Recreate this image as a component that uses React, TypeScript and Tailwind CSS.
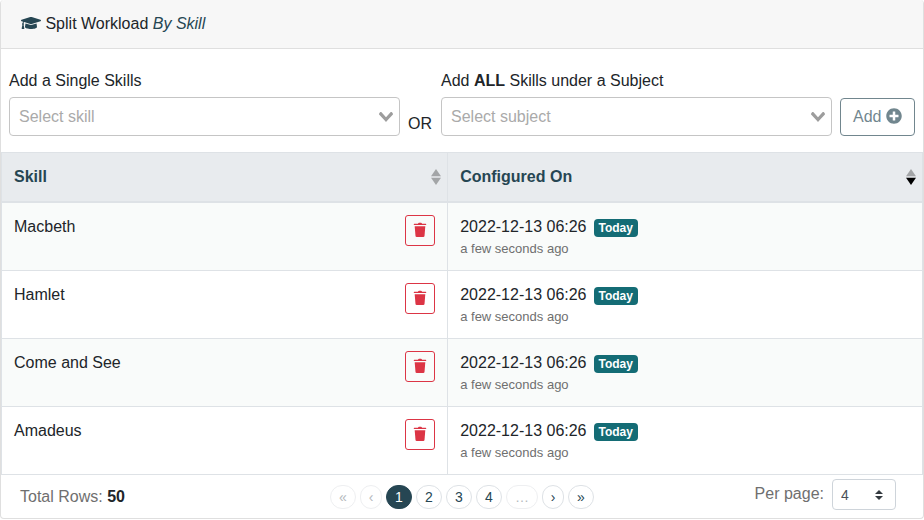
import React from "react";
import { FaGraduationCap, FaPlusCircle } from "react-icons/fa";

const rows = ["Macbeth", "Hamlet", "Come and See", "Amadeus"];

function SearchSelect({ id, label, placeholder }: { id: string; label: React.ReactNode; placeholder: string }) {
  return (
    <div className="min-w-0 flex-1">
      <label htmlFor={id} className="mb-1 block">
        {label}
      </label>
      <div className="flex h-[39px] items-center rounded border border-[#c5c5c5] bg-white pr-1.5 pl-[9px]">
        <input
          id={id}
          type="text"
          role="combobox"
          aria-expanded="false"
          placeholder={placeholder}
          className="min-w-0 flex-1 bg-transparent outline-none placeholder:text-[#aaaaaa]"
        />
        <svg width="14" height="10" viewBox="0 0 14 10" className="shrink-0 fill-[#9d9d9d]" aria-hidden="true">
          <path d="M9.211364 7.59931l4.48338-4.867229c.407008-.441854.407008-1.158247 0-1.60046l-.73712-.80023c-.407008-.441854-1.066904-.441854-1.474243 0L7 5.198617 2.51662.33139c-.407008-.441853-1.066904-.441853-1.474243 0l-.737121.80023c-.407008.441854-.407008 1.158248 0 1.600461l4.48338 4.867228L7 10l2.211364-2.40069z" />
        </svg>
      </div>
    </div>
  );
}

function SortHeader({ title, descending = false }: { title: string; descending?: boolean }) {
  return (
    <button type="button" className="flex w-full items-center justify-between font-bold">
      {title}
      <svg width="10" height="16" viewBox="0 0 10 16" aria-hidden="true">
        <path d="M5 0L10 7.3H0z" fill="#a3a5a7" />
        <path d="M5 16L10 8.7H0z" fill={descending ? "#000000" : "#a3a5a7"} />
      </svg>
    </button>
  );
}

function TrashIcon() {
  return (
    <svg width="14" height="16" viewBox="0 0 14 16" fill="currentColor" aria-hidden="true">
      <path d="M5.2 1.2Q5.4.7 6 .7h2q.6 0 .8.5l.2.5h3.700q.5 0 .5.5v.5q0 .4-.5.4H1.300q-.5 0-.5-.4v-.5q0-.5.5-.5H5z" />
      <path d="M1.700 4.200h10.600l-.8 9.700q-.1 1.100-1.200 1.100H3.700q-1.100 0-1.200-1.100z" />
    </svg>
  );
}

function PageButton({
  children,
  width = "w-[26px]",
  current = false,
  disabled = false,
  label,
}: {
  children: React.ReactNode;
  width?: string;
  current?: boolean;
  disabled?: boolean;
  label?: string;
}) {
  const tone = current
    ? "border-[#264653] bg-[#264653] text-white"
    : disabled
      ? "border-[#eeeff1] text-[#b4b9bd]"
      : "border-[#dee2e6] text-[#264653]";
  return (
    <li>
      <button
        type="button"
        disabled={disabled}
        aria-label={label}
        aria-current={current ? "page" : undefined}
        className={`flex h-6 items-center justify-center rounded-full border text-sm ${width} ${tone}`}
      >
        {children}
      </button>
    </li>
  );
}

export default function App() {
  return (
    <div className="rounded border border-t-0 border-[#dfdfdf] bg-white font-['Liberation_Sans',Arial,sans-serif] text-base text-[#212529]">
      <header className="rounded-t border-b border-[#dfdfdf] bg-[#f7f7f7] px-5 py-3">
        <h1>
          <FaGraduationCap className="inline w-5 align-[-2px] text-[#264653]" aria-hidden="true" /> Split Workload{" "}
          <span className="text-[#264653] italic">By Skill</span>
        </h1>
      </header>

      <form className="flex items-end gap-2 px-2 pt-5 pb-4">
        <SearchSelect id="skill" label="Add a Single Skills" placeholder="Select skill" />
        <span className="w-[25px]">OR</span>
        <SearchSelect
          id="subject"
          label={
            <>
              Add <strong>ALL</strong> Skills under a Subject
            </>
          }
          placeholder="Select subject"
        />
        <button
          type="button"
          disabled
          className="h-[38px] w-[75px] rounded border border-[#264653] text-[#264653] opacity-65"
        >
          Add <FaPlusCircle className="inline align-[-2px]" aria-hidden="true" />
        </button>
      </form>

      <table className="w-full table-fixed border-separate border-spacing-0 border-x border-[#dee2e6]">
        <colgroup>
          <col className="w-[48.5%]" />
          <col />
        </colgroup>
        <thead className="bg-[#e8ebee] text-left text-[#264653]">
          <tr>
            <th className="border-t border-r border-b-2 border-[#dee2e6] py-3 pr-1.5 pl-3" aria-sort="none">
              <SortHeader title="Skill" />
            </th>
            <th className="border-t border-b-2 border-[#dee2e6] py-3 pr-1.5 pl-3" aria-sort="descending">
              <SortHeader title="Configured On" descending />
            </th>
          </tr>
        </thead>
        <tbody>
          {rows.map((name) => (
            <tr key={name} className="h-[68px] align-top odd:bg-[#f9fbfa]">
              <td className="border-r border-b border-[#dee2e6] p-3">
                <div className="flex items-start justify-between">
                  {name}
                  <button
                    type="button"
                    aria-label={`Delete ${name}`}
                    className="flex h-[31px] w-[30px] items-center justify-center rounded-[3px] border border-[#dc3545] pb-px text-[#dc3545]"
                  >
                    <TrashIcon />
                  </button>
                </div>
              </td>
              <td className="border-b border-[#dee2e6] px-3 pt-3">
                <div className="flex items-center gap-[7px]">
                  2022-12-13 06:26
                  <span className="mt-0.5 rounded bg-[#146c75] px-[5px] text-xs leading-[18px] font-bold text-white">
                    Today
                  </span>
                </div>
                <div className="text-[13px] leading-5 text-[#6f6f6f]">a few seconds ago</div>
              </td>
            </tr>
          ))}
        </tbody>
      </table>

      <footer className="grid grid-cols-[1fr_auto_1fr] items-start pb-2 text-[#6f6f6f]">
        <div className="pt-2.5 pl-[19px]">
          Total Rows: <strong className="text-[#212529]">50</strong>
        </div>
        <nav aria-label="Pagination" className="pt-2.5">
          <ul className="flex gap-1">
            <PageButton disabled label="First page">«</PageButton>
            <PageButton disabled width="w-[22px]" label="Previous page">‹</PageButton>
            <PageButton current>1</PageButton>
            <PageButton>2</PageButton>
            <PageButton>3</PageButton>
            <PageButton>4</PageButton>
            <PageButton disabled width="w-8">…</PageButton>
            <PageButton width="w-[22px]" label="Next page">›</PageButton>
            <PageButton label="Last page">»</PageButton>
          </ul>
        </nav>
        <div className="flex items-center justify-end gap-2 pt-1 pr-[27px]">
          <label htmlFor="per-page" className="pb-0.5">
            Per page:
          </label>
          <div className="grid items-center">
            <select
              id="per-page"
              className="col-start-1 row-start-1 h-[31px] w-16 appearance-none rounded border border-[#ced4da] bg-white pl-2 text-sm text-[#495057]"
            >
              <option>4</option>
              <option>10</option>
              <option>20</option>
            </select>
            <svg
              width="8"
              height="10"
              viewBox="0 0 4 5"
              className="pointer-events-none col-start-1 row-start-1 mr-[13px] justify-self-end fill-[#343a40]"
              aria-hidden="true"
            >
              <path d="M2 0L0 2h4zm0 5L0 3h4z" />
            </svg>
          </div>
        </div>
      </footer>
    </div>
  );
}
